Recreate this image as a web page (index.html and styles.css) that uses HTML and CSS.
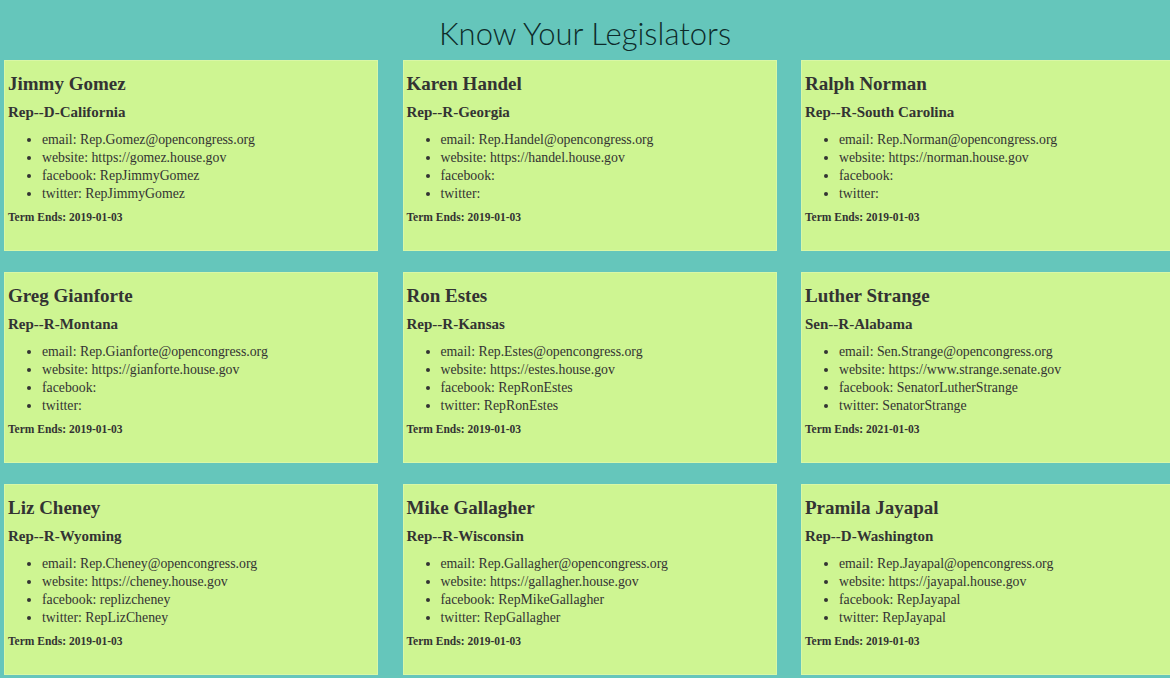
FILE: index.html
```html
<!DOCTYPE html>
<html>
<head>
<meta charset="utf-8">
<link rel="stylesheet" href="styles.css">
</head>
<body>
<h1 class="title">Know Your Legislators</h1>
<div class="grid">
  <div class="card">
    <h2 class="name">Jimmy Gomez</h2>
    <h3 class="role">Rep--D-California</h3>
    <ul class="info">
      <li>email: Rep.Gomez@opencongress.org</li>
      <li>website: https://gomez.house.gov</li>
      <li>facebook: RepJimmyGomez</li>
      <li>twitter: RepJimmyGomez</li>
    </ul>
    <p class="term">Term Ends: 2019-01-03</p>
  </div>
  <div class="card">
    <h2 class="name">Karen Handel</h2>
    <h3 class="role">Rep--R-Georgia</h3>
    <ul class="info">
      <li>email: Rep.Handel@opencongress.org</li>
      <li>website: https://handel.house.gov</li>
      <li>facebook: </li>
      <li>twitter: </li>
    </ul>
    <p class="term">Term Ends: 2019-01-03</p>
  </div>
  <div class="card">
    <h2 class="name">Ralph Norman</h2>
    <h3 class="role">Rep--R-South Carolina</h3>
    <ul class="info">
      <li>email: Rep.Norman@opencongress.org</li>
      <li>website: https://norman.house.gov</li>
      <li>facebook: </li>
      <li>twitter: </li>
    </ul>
    <p class="term">Term Ends: 2019-01-03</p>
  </div>
  <div class="card">
    <h2 class="name">Greg Gianforte</h2>
    <h3 class="role">Rep--R-Montana</h3>
    <ul class="info">
      <li>email: Rep.Gianforte@opencongress.org</li>
      <li>website: https://gianforte.house.gov</li>
      <li>facebook: </li>
      <li>twitter: </li>
    </ul>
    <p class="term">Term Ends: 2019-01-03</p>
  </div>
  <div class="card">
    <h2 class="name">Ron Estes</h2>
    <h3 class="role">Rep--R-Kansas</h3>
    <ul class="info">
      <li>email: Rep.Estes@opencongress.org</li>
      <li>website: https://estes.house.gov</li>
      <li>facebook: RepRonEstes</li>
      <li>twitter: RepRonEstes</li>
    </ul>
    <p class="term">Term Ends: 2019-01-03</p>
  </div>
  <div class="card">
    <h2 class="name">Luther Strange</h2>
    <h3 class="role">Sen--R-Alabama</h3>
    <ul class="info">
      <li>email: Sen.Strange@opencongress.org</li>
      <li>website: https://www.strange.senate.gov</li>
      <li>facebook: SenatorLutherStrange</li>
      <li>twitter: SenatorStrange</li>
    </ul>
    <p class="term">Term Ends: 2021-01-03</p>
  </div>
  <div class="card">
    <h2 class="name">Liz Cheney</h2>
    <h3 class="role">Rep--R-Wyoming</h3>
    <ul class="info">
      <li>email: Rep.Cheney@opencongress.org</li>
      <li>website: https://cheney.house.gov</li>
      <li>facebook: replizcheney</li>
      <li>twitter: RepLizCheney</li>
    </ul>
    <p class="term">Term Ends: 2019-01-03</p>
  </div>
  <div class="card">
    <h2 class="name">Mike Gallagher</h2>
    <h3 class="role">Rep--R-Wisconsin</h3>
    <ul class="info">
      <li>email: Rep.Gallagher@opencongress.org</li>
      <li>website: https://gallagher.house.gov</li>
      <li>facebook: RepMikeGallagher</li>
      <li>twitter: RepGallagher</li>
    </ul>
    <p class="term">Term Ends: 2019-01-03</p>
  </div>
  <div class="card">
    <h2 class="name">Pramila Jayapal</h2>
    <h3 class="role">Rep--D-Washington</h3>
    <ul class="info">
      <li>email: Rep.Jayapal@opencongress.org</li>
      <li>website: https://jayapal.house.gov</li>
      <li>facebook: RepJayapal</li>
      <li>twitter: RepJayapal</li>
    </ul>
    <p class="term">Term Ends: 2019-01-03</p>
  </div>
</div>
</body>
</html>
```
FILE: styles.css
```css
html, body {
  margin: 0;
  padding: 0;
  background: #65c6bb;
  overflow: hidden;
}
body {
  width: 1170px;
  height: 678px;
  font-family: "Liberation Serif", Georgia, serif;
  color: #333333;
}
.title {
  margin: 0;
  height: 60px;
  line-height: 66px;
  text-align: center;
  font-family: Lato, "Open Sans", sans-serif;
  font-weight: 300;
  font-size: 31px;
  color: #0d2b2a;
}
.grid {
  display: grid;
  grid-template-columns: repeat(3, 374px);
  column-gap: 24.5px;
  row-gap: 21px;
  padding-left: 4px;
}
.card {
  box-sizing: border-box;
  height: 191px;
  background: #cef592;
  border: 1px solid #d9f7a6;
  padding: 0 3px;
}
.name {
  margin: 12px 0 0;
  font-size: 19px;
  line-height: 22px;
  font-weight: bold;
}
.role {
  margin: 8px 0 0;
  font-size: 15px;
  line-height: 18px;
  font-weight: bold;
}
.info {
  margin: 10px 0 0;
  padding-left: 34px;
  font-size: 13.8px;
  line-height: 18px;
}
.term {
  margin: 7px 0 0;
  font-size: 11.5px;
  line-height: 14px;
  font-weight: bold;
}
```
